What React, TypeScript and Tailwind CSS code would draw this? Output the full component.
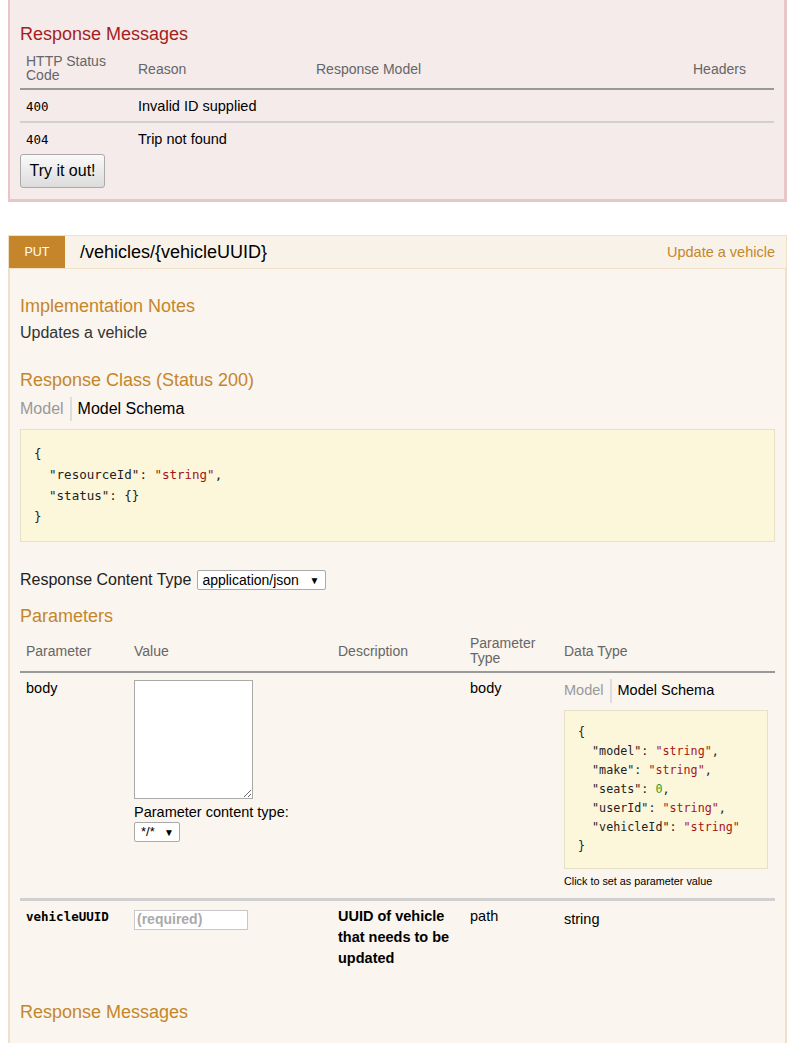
import React from 'react';

const keyCls = 'text-[#222]';
const strCls = 'text-[#a31515]';
const numCls = 'text-[#2e9a2e]';

function Json({ rows }: { rows: [string, string, 'str' | 'num' | 'plain'][] }) {
  return (
    <>
      <div>{'{'}</div>
      {rows.map(([k, v, kind], i) => (
        <div key={k} className="pl-[2ch] whitespace-pre">
          <span className={keyCls}>"{k}"</span>
          <span>: </span>
          <span className={kind === 'str' ? strCls : kind === 'num' ? numCls : ''}>{v}</span>
          {i < rows.length - 1 ? ',' : ''}
        </div>
      ))}
      <div>{'}'}</div>
    </>
  );
}

function FakeSelect({ label, className }: { label: string; className: string }) {
  return (
    <span
      className={`inline-flex items-center justify-between h-[20px] border border-[#aaa] rounded-[2px] bg-white text-black ${className}`}
    >
      <span>{label}</span>
      <span className="text-[10px]">▼</span>
    </span>
  );
}

export default function App() {
  return (
    <div className="w-[795px] min-h-[1045px] bg-white px-[8px] font-['Liberation_Sans',Arial,sans-serif] text-[#333]">
      {/* previous operation: tail of the DELETE content block */}
      <section className="bg-[#f5ebeb] border-l-2 border-r-[3px] border-b-[3px] border-[#e8c6c7] px-[10px] pt-[23px] pb-[11px]">
        <h4 className="text-[18px] leading-[22px] text-[#a41e22]">Response Messages</h4>
        <div className="mt-[5px] text-[14px]">
          <div className="grid grid-cols-[112px_178px_377px_87px] border-b-2 border-[#999] text-[#666]">
            <div className="px-[6px] pt-[4px] pb-[6px] leading-[14px]">
              HTTP Status
              <br />
              Code
            </div>
            <div className="px-[6px] flex items-center">Reason</div>
            <div className="px-[6px] flex items-center">Response Model</div>
            <div className="px-[6px] flex items-center">Headers</div>
          </div>
          <div className="grid grid-cols-[112px_178px_377px_87px] border-b-2 border-[#d0d0d0] text-black">
            <div className="px-[6px] pt-[8px] pb-[6px] leading-[17px] font-['DejaVu_Sans_Mono',monospace] text-[12.5px]">400</div>
            <div className="px-[6px] pt-[8px] pb-[6px] leading-[17px] text-[14.5px]">Invalid ID supplied</div>
            <div />
            <div />
          </div>
          <div className="grid grid-cols-[112px_178px_377px_87px] text-black">
            <div className="px-[6px] pt-[8px] pb-[6px] leading-[17px] font-['DejaVu_Sans_Mono',monospace] text-[12.5px]">404</div>
            <div className="px-[6px] pt-[8px] pb-[6px] leading-[17px] text-[14.5px]">Trip not found</div>
            <div />
            <div />
          </div>
        </div>
        <button className="h-[34px] w-[85px] rounded-[3px] border border-[#aaa] bg-linear-to-b from-[#fafafa] to-[#dcdcdc] text-[16px] text-black">
          Try it out!
        </button>
      </section>

      {/* PUT operation */}
      <div className="mt-[33px] h-[34px] flex items-center border border-[#f0e0ca] bg-[#f9f2e9]">
        <span className="w-[56px] h-[32px] bg-[#c5862b] text-white text-[12.5px] flex items-center justify-center">
          PUT
        </span>
        <span className="ml-[15px] pt-[1px] text-[18px] text-black">/vehicles/{'{vehicleUUID}'}</span>
        <span className="ml-auto mr-[11px] pt-[2px] text-[14.5px] text-[#c5862b]">Update a vehicle</span>
      </div>

      <section className="bg-[#faf5ee] border-x-2 border-[#f0e0ca] px-[10px] pt-[26px] pb-[20px]">
        <h4 className="text-[18px] leading-[22px] text-[#c5862b]">Implementation Notes</h4>
        <p className="mt-[6px] text-[16px] leading-[20px]">Updates a vehicle</p>

        <h4 className="mt-[26px] text-[18px] leading-[22px] text-[#c5862b]">Response Class (Status 200)</h4>
        <div className="mt-[6px] h-[24px] flex items-center text-[16px]">
          <span className="text-[#999] pr-[6px]">Model</span>
          <span className="w-[2px] h-[24px] bg-[#ddd]" />
          <span className="pl-[6px] text-black">Model Schema</span>
        </div>
        <div className="mt-[8px] border border-[#e5e0c6] bg-[#fcf6db] pl-[13px] pt-[13px] pb-[14px] font-['DejaVu_Sans_Mono',monospace] text-[12.5px] leading-[21px] text-[#222]">
          <Json
            rows={[
              ['resourceId', '"string"', 'str'],
              ['status', '{}', 'plain'],
            ]}
          />
        </div>

        <div className="mt-[28px] h-[20px] flex items-center text-[16px] text-[#222]">
          <span>Response Content Type</span>
          <FakeSelect label="application/json" className="ml-[6px] w-[129px] pl-[4px] pr-[6px] text-[14px]" />
        </div>

        <h4 className="mt-[15px] text-[18px] leading-[22px] text-[#c5862b]">Parameters</h4>
        <div className="mt-[4px] text-[14.5px] text-black">
          <div className="grid grid-cols-[108px_204px_132px_94px_217px] border-b-2 border-[#999] text-[#666] text-[14px]">
            <div className="px-[6px] flex items-center">Parameter</div>
            <div className="px-[6px] flex items-center">Value</div>
            <div className="px-[6px] flex items-center">Description</div>
            <div className="px-[6px] py-[5px] leading-[15px]">
              Parameter
              <br />
              Type
            </div>
            <div className="px-[6px] flex items-center">Data Type</div>
          </div>

          <div className="grid grid-cols-[108px_204px_132px_94px_217px] border-b-[3px] border-[#d0d0d0] pt-[7px] pb-[10px]">
            <div className="px-[6px] leading-[16px]">body</div>
            <div className="px-[6px] flex flex-col items-start">
              <textarea className="w-[119px] h-[119px] border border-[#aaa] bg-white resize" />
              <span className="mt-[5px] leading-[16px]">Parameter content type:</span>
              <FakeSelect label="*/*" className="mt-[2px] w-[46px] pl-[6px] pr-[5px] text-[13px]" />
            </div>
            <div />
            <div className="px-[6px] leading-[16px]">body</div>
            <div className="px-[6px]">
              <div className="h-[22px] flex items-center">
                <span className="text-[#999] pr-[6px]">Model</span>
                <span className="w-[2px] h-[24px] bg-[#ddd]" />
                <span className="pl-[6px]">Model Schema</span>
              </div>
              <div className="mt-[8px] w-[204px] border border-[#e5e0c6] bg-[#fcf6db] pl-[13px] pt-[12px] pb-[12px] font-['DejaVu_Sans_Mono',monospace] text-[11.7px] leading-[19px] text-[#222]">
                <Json
                  rows={[
                    ['model', '"string"', 'str'],
                    ['make', '"string"', 'str'],
                    ['seats', '0', 'num'],
                    ['userId', '"string"', 'str'],
                    ['vehicleId', '"string"', 'str'],
                  ]}
                />
              </div>
              <div className="mt-[5px] text-[10.8px] leading-[14px]">Click to set as parameter value</div>
            </div>
          </div>

          <div className="grid grid-cols-[108px_204px_132px_94px_217px] pt-[5px] pb-[8px] leading-[21px]">
            <div className="px-[6px] font-['DejaVu_Sans_Mono',monospace] font-bold text-[12.5px]">vehicleUUID</div>
            <div className="px-[6px] pt-[3px]">
              <input
                placeholder="(required)"
                className="w-[114px] h-[20px] border border-[#c8c8c8] bg-white px-[2px] text-[14px] placeholder:text-[#aaa] placeholder:font-bold"
              />
            </div>
            <div className="px-[6px] font-bold">UUID of vehicle that needs to be updated</div>
            <div className="px-[6px]">path</div>
            <div className="px-[6px] pt-[3px]">string</div>
          </div>
        </div>

        <h4 className="mt-[24px] text-[18px] leading-[22px] text-[#c5862b]">Response Messages</h4>
      </section>
    </div>
  );
}
